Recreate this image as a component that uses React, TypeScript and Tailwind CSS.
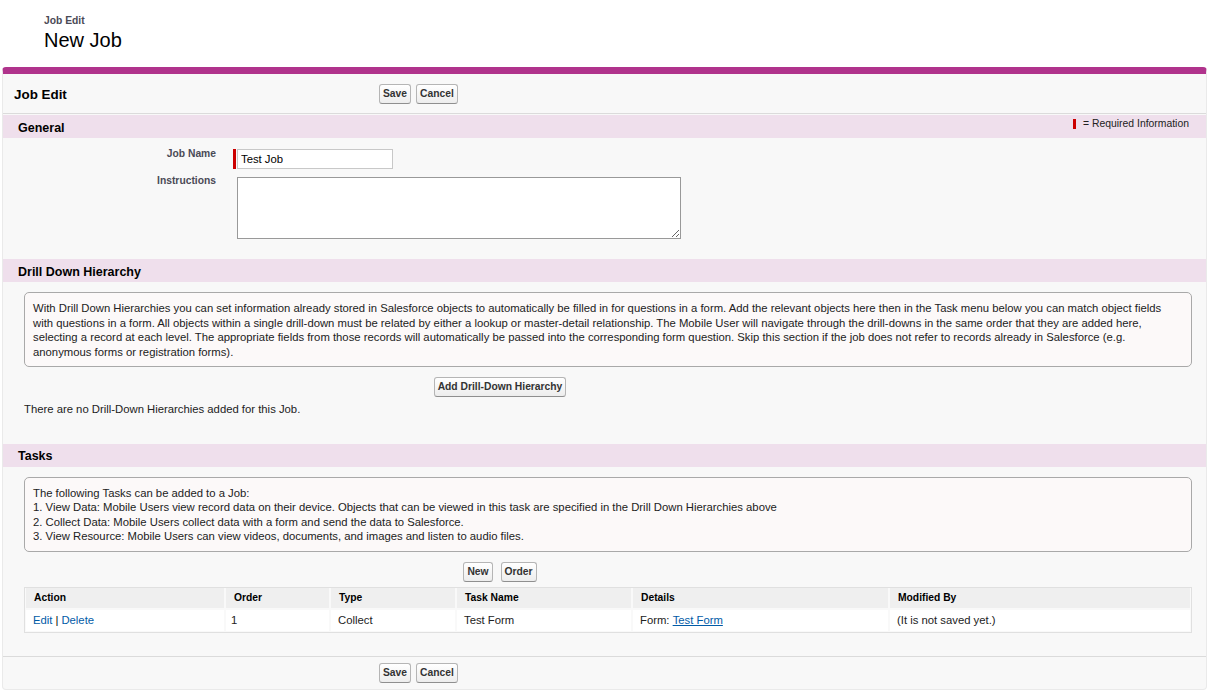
import React from "react";

function Btn({ children }: { children: React.ReactNode }) {
  return (
    <button className="h-[20px] px-[3px] rounded-[3px] border border-[#b5b5b5] border-b-[#8f8f8f] bg-gradient-to-b from-white to-[#ededed] text-[10.3px] font-bold text-[#333] leading-[18px]">
      {children}
    </button>
  );
}

function SectionHeader({ title, right }: { title: string; right?: React.ReactNode }) {
  return (
    <div className="mt-[1px] h-[23px] bg-[#efdfec] flex items-center justify-between pl-[15px] pr-[17px]">
      <h3 className="text-[12.5px] font-bold text-black leading-[14px] pt-[2px]">{title}</h3>
      {right}
    </div>
  );
}

const drillLines = [
  "With Drill Down Hierarchies you can set information already stored in Salesforce objects to automatically be filled in for questions in a form. Add the relevant objects here then in the Task menu below you can match object fields",
  "with questions in a form. All objects within a single drill-down must be related by either a lookup or master-detail relationship. The Mobile User will navigate through the drill-downs in the same order that they are added here,",
  "selecting a record at each level. The appropriate fields from those records will automatically be passed into the corresponding form question. Skip this section if the job does not refer to records already in Salesforce (e.g.",
  "anonymous forms or registration forms).",
];

const taskLines = [
  "The following Tasks can be added to a Job:",
  "1. View Data: Mobile Users view record data on their device. Objects that can be viewed in this task are specified in the Drill Down Hierarchies above",
  "2. Collect Data: Mobile Users collect data with a form and send the data to Salesforce.",
  "3. View Resource: Mobile Users can view videos, documents, and images and listen to audio files.",
];

function InfoBox({ lines }: { lines: string[] }) {
  return (
    <div className="ml-[21px] mr-[14px] border border-[#a9a9a9] rounded-[5px] bg-[#fcf9f9] pt-[8px] pb-[7px] px-[8px] text-[11.3px] leading-[14.5px] text-[#222]">
      {lines.map((l, i) => (
        <div key={i} className="whitespace-nowrap">
          {l}
        </div>
      ))}
    </div>
  );
}

export default function App() {
  return (
    <div className="min-h-[695px] bg-white font-['Liberation_Sans',Arial,sans-serif] text-[#222]">
      <div className="h-[67px] pl-[44px] pt-[15px]">
        <div className="text-[10.3px] font-bold text-[#4a4a56] leading-[12px]">Job Edit</div>
        <h1 className="text-[20px] text-black leading-[24px] mt-[1px]">New Job</h1>
      </div>

      <div className="mx-[2px] border border-[#eaeaea] border-t-[7px] border-t-[#b0338c] rounded-[4px] bg-[#f8f8f8]">
        {/* header */}
        <div className="h-[40px] flex items-center border-b border-[#dbdbdb]">
          <div className="w-[376px] pl-[11px]">
            <h2 className="text-[13.4px] font-bold text-black pt-[3px]">Job Edit</h2>
          </div>
          <div className="flex gap-[5px]">
            <Btn>Save</Btn>
            <Btn>Cancel</Btn>
          </div>
        </div>

        {/* General */}
        <SectionHeader
          title="General"
          right={
            <div className="self-start mt-[3px] flex items-center gap-[7px] text-[10.4px] leading-[12px] text-[#222]">
              <span className="w-[3px] h-[10px] bg-[#c00]" />
              <span>= Required Information</span>
            </div>
          }
        />
        <div className="pt-[11px] pb-[19px]">
          <div className="flex items-start">
            <div className="w-[213px] text-right text-[10.3px] font-bold text-[#4a4a56] leading-[9px]">
              Job Name
            </div>
            <div className="ml-[17px] flex items-stretch">
              <span className="w-[3px] mr-[1px] bg-[#c00]" />
              <input
                readOnly
                value="Test Job"
                className="w-[156px] h-[20px] border border-[#c8c8c8] bg-white px-[3px] text-[11.3px] text-black outline-none"
              />
            </div>
          </div>
          <div className="flex items-start mt-[8px]">
            <div className="w-[213px] text-right text-[10.3px] font-bold text-[#4a4a56] leading-[8px]">
              Instructions
            </div>
            <div className="ml-[21px]">
              <textarea className="block w-[444px] h-[62px] border border-[#999] bg-white outline-none" />
            </div>
          </div>
        </div>

        {/* Drill Down */}
        <SectionHeader title="Drill Down Hierarchy" />
        <div className="pt-[10px] pb-[26px]">
          <InfoBox lines={drillLines} />
          <div className="w-[994px] flex justify-center mt-[10px]">
            <Btn>Add Drill-Down Hierarchy</Btn>
          </div>
          <div className="ml-[21px] mt-[5px] text-[11.3px] leading-[14.5px] text-[#222]">
            There are no Drill-Down Hierarchies added for this Job.
          </div>
        </div>

        {/* Tasks */}
        <SectionHeader title="Tasks" />
        <div className="pt-[10px] pb-[23px]">
          <InfoBox lines={taskLines} />
          <div className="w-[994px] flex justify-center gap-[8px] mt-[10px]">
            <Btn>New</Btn>
            <Btn>Order</Btn>
          </div>
          <div className="ml-[21px] mr-[14px] mt-[5px] border border-[#e0e0e0] bg-[#f9f9f9] px-[1px] pb-[1px]">
            <div className="grid grid-cols-[198px_103px_124px_174px_255px_1fr] gap-x-[2px]">
              {["Action", "Order", "Type", "Task Name", "Details", "Modified By"].map((h) => (
                <div
                  key={h}
                  className="h-[20px] bg-[#efefef] pl-[8px] flex items-center text-[10.3px] font-bold text-black"
                >
                  {h}
                </div>
              ))}
            </div>
            <div className="grid grid-cols-[198px_103px_124px_174px_255px_1fr] gap-x-[2px] mt-[2px] text-[11.3px] text-[#222]">
              <div className="h-[21px] bg-white pl-[7px] flex items-center">
                <span className="text-[#015ba7]">Edit</span>
                <span className="mx-[3px] text-black">|</span>
                <span className="text-[#015ba7]">Delete</span>
              </div>
              <div className="h-[21px] bg-white pl-[5px] flex items-center">1</div>
              <div className="h-[21px] bg-white pl-[7px] flex items-center">Collect</div>
              <div className="h-[21px] bg-white pl-[7px] flex items-center">Test Form</div>
              <div className="h-[21px] bg-white pl-[7px] flex items-center">
                Form:&nbsp;<span className="text-[#015ba7] underline">Test Form</span>
              </div>
              <div className="h-[21px] bg-white pl-[7px] flex items-center">(It is not saved yet.)</div>
            </div>
          </div>
        </div>

        {/* bottom buttons */}
        <div className="border-t border-[#dbdbdb] flex pt-[6px] pb-[6px]">
          <div className="w-[376px]" />
          <div className="flex gap-[5px]">
            <Btn>Save</Btn>
            <Btn>Cancel</Btn>
          </div>
        </div>
      </div>
    </div>
  );
}
